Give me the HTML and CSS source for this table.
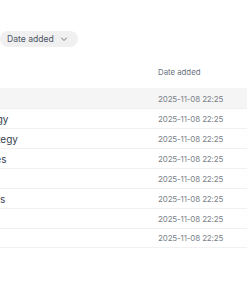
FILE: index.html
```html
<!DOCTYPE html>
<html lang="en">
<head>
    <meta charset="UTF-8">
    <meta name="viewport" content="width=device-width, initial-scale=1.0">
    <title>Documents</title>
    <link rel="stylesheet" href="styles.css">
</head>
<body>
    <div class="page">
        <div class="toolbar">
            <button class="sort-pill">
                <span>Date added</span>
                <svg class="chevron" width="8" height="8" viewBox="0 0 8 8"><path d="M1.5 3 L4 5.5 L6.5 3" fill="none" stroke="#6b7280" stroke-width="1" stroke-linecap="round" stroke-linejoin="round"/></svg>
            </button>
        </div>

        <div class="table">
            <div class="table-head">
                <div class="cell name">Name</div>
                <div class="cell date">Date added</div>
            </div>
            <div class="row active">
                <div class="cell name">Q4 roadmap</div>
                <div class="cell date">2025-11-08 22:25</div>
            </div>
            <div class="row">
                <div class="cell name">Brand strategy</div>
                <div class="cell date">2025-11-08 22:25</div>
            </div>
            <div class="row">
                <div class="cell name">Content strategy</div>
                <div class="cell date">2025-11-08 22:25</div>
            </div>
            <div class="row">
                <div class="cell name">Meeting notes</div>
                <div class="cell date">2025-11-08 22:25</div>
            </div>
            <div class="row">
                <div class="cell name">Budget plan</div>
                <div class="cell date">2025-11-08 22:25</div>
            </div>
            <div class="row">
                <div class="cell name">Release notes</div>
                <div class="cell date">2025-11-08 22:25</div>
            </div>
            <div class="row">
                <div class="cell name">Team goals</div>
                <div class="cell date">2025-11-08 22:25</div>
            </div>
            <div class="row">
                <div class="cell name">Ideas</div>
                <div class="cell date">2025-11-08 22:25</div>
            </div>
        </div>
    </div>
</body>
</html>
```

FILE: styles.css
```css
body {
    margin: 0;
    font-family: 'Inter', 'Liberation Sans', sans-serif;
    background: #ffffff;
    overflow: hidden;
}

/* the page is wider than the window, its left side is cut off */
.page {
    margin-left: -61px;
    width: 400px;
}

.toolbar {
    display: flex;
    padding: 31px 0 0 61px;
    height: 25px;
}
.sort-pill {
    display: flex;
    align-items: center;
    gap: 6px;
    height: 16px;
    padding: 0 10px 0 7px;
    border: none;
    border-radius: 8px;
    background-color: #f0f0f1;
    color: #4b5563;
    font-family: inherit;
    font-size: 8.6px;
}
.chevron {
    display: block;
}

.table-head,
.row {
    display: flex;
    align-items: center;
}
.table-head {
    height: 32px;
    color: #6b7280;
    font-size: 7.8px;
}
.row {
    height: 20px;
    border-top: 1px solid #f1f1f2;
    box-sizing: border-box;
    font-size: 8px;
    letter-spacing: -0.15px;
}
.row:last-child {
    border-bottom: 1px solid #f1f1f2;
}
.row.active {
    background-color: #f5f5f6;
    border-top-color: #f5f5f6;
}
.cell.name {
    width: 219px;
    color: #374151;
    font-size: 10px;
    letter-spacing: 0;
}
.table-head .cell.name {
    color: transparent;
}
.row .cell.date {
    color: #7a7f88;
}
```
